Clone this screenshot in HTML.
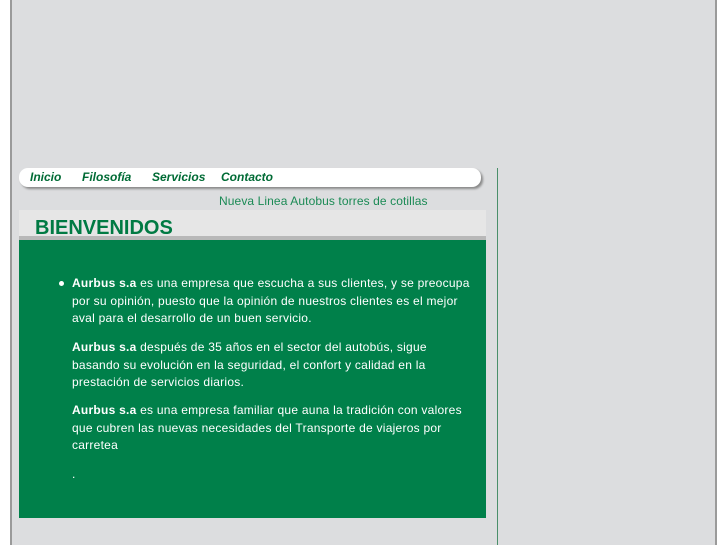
<!DOCTYPE html>
<html><head><meta charset="utf-8"><style>
body{margin:0;width:727px;height:545px;background:#fff;position:relative;overflow:hidden;font-family:"Liberation Sans",sans-serif}
.panel{position:absolute;left:10px;top:0;width:707px;height:545px;background:#dcdddf;border-left:2px solid #9a9a9a;border-right:2px solid #9a9a9a;box-sizing:border-box}
.nav{position:absolute;left:19px;top:168px;width:462px;height:19px;background:#fff;border-radius:9px;box-shadow:2px 2px 2px #8a8a8a}
.nav span{position:absolute;top:2px;font-style:italic;font-weight:bold;font-size:12px;color:#006b35}
.vl{position:absolute;left:497px;top:168px;width:1px;height:377px;background:#4a8f6a}
.sub{position:absolute;left:219px;top:194px;font-size:12px;color:#1b8a55;letter-spacing:0.1px}
.band{position:absolute;left:19px;top:210px;width:467px;height:26px;background:#e6e6e6}
.band b{position:absolute;left:16px;top:7px;font-size:20px;color:#007a43}
.line{position:absolute;left:19px;top:236px;width:467px;height:4px;background:#b8b8b8}
.green{position:absolute;left:19px;top:240px;width:467px;height:278px;background:#00804a;color:#fff;font-size:12px;line-height:17.5px;letter-spacing:0.25px}
.green p{margin:0;position:absolute;left:53px;white-space:nowrap}
.dot{position:absolute;left:40px;top:41px;width:5px;height:5px;border-radius:50%;background:#fff}
</style></head><body>
<div class="panel"></div>
<div class="nav"><span style="left:11px">Inicio</span><span style="left:63px">Filosofía</span><span style="left:133px">Servicios</span><span style="left:202px">Contacto</span></div>
<div class="vl"></div>
<div class="sub">Nueva Linea Autobus torres de cotillas</div>
<div class="band"><b>BIENVENIDOS</b></div>
<div class="line"></div>
<div class="green">
<div class="dot"></div>
<p style="top:35px"><b>Aurbus s.a</b> es una empresa que escucha a sus clientes, y se preocupa<br>por su opinión, puesto que la opinión de nuestros clientes es el mejor<br>aval para el desarrollo de un buen servicio.</p>
<p style="top:99px"><b>Aurbus s.a</b> después de 35 años en el sector del autobús, sigue<br>basando su evolución en la seguridad, el confort y calidad en la<br>prestación de servicios diarios.</p>
<p style="top:162px"><b>Aurbus s.a</b> es una empresa familiar que auna la tradición con valores<br>que cubren las nuevas necesidades del Transporte de viajeros por<br>carretea</p>
<p style="top:226px">.</p>
</div>
</body></html>
